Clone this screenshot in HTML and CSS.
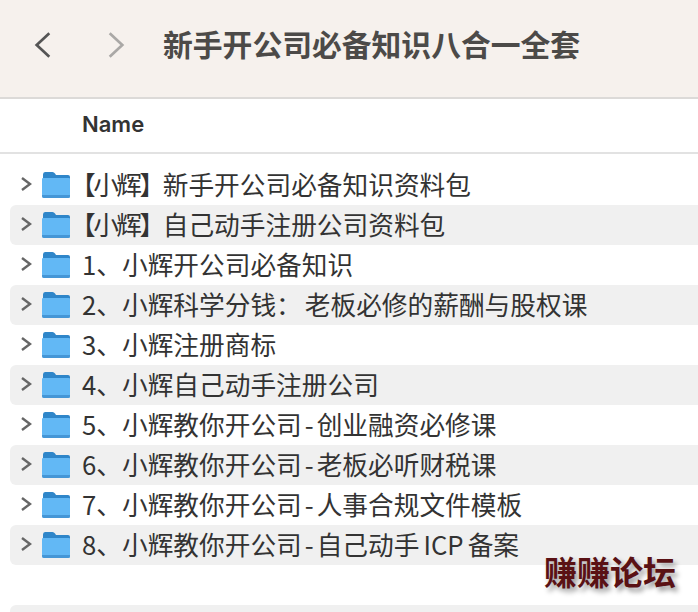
FILE: index.html
```html
<!DOCTYPE html>
<html lang="zh">
<head>
<meta charset="utf-8">
<title>新手开公司必备知识八合一全套</title>
<link rel="stylesheet" href="styles.css">
</head>
<body>
<svg class="defs" width="0" height="0">
  <symbol id="folder" viewBox="0 0 30 28">
    <path d="M2 26V4.5Q2 2 4 2h7.5q1.5 0 2.5 1.5L15 5h12q2 0 2 2v19q0 2-2 2H4q-2 0-2-2z" fill="#2f86c9"/>
    <path d="M1 9q0-1 1-1h26q1 0 1 1v17q0 2-2 2H3q-2 0-2-2z" fill="#62b8f5"/>
    <path d="M1 25h28v1q0 2-2 2H3q-2 0-2-2z" fill="#4596d6"/>
  </symbol>
  <symbol id="chev" viewBox="0 0 12 16">
    <path d="M2 2l8 6-8 6" fill="none" stroke="#666" stroke-width="2.4"/>
  </symbol>
</svg>
<div class="window">
  <header class="toolbar">
    <svg class="nav nav-back" viewBox="0 0 20 30"><path d="M17 2L3 15l14 13" fill="none" stroke="#555" stroke-width="3"/></svg>
    <svg class="nav nav-forward" viewBox="0 0 20 30"><path d="M3 2l14 13L3 28" fill="none" stroke="#aaa8a6" stroke-width="3"/></svg>
    <h1 class="title">新手开公司必备知识八合一全套</h1>
  </header>
  <div class="columns"><span class="col-name">Name</span></div>
  <ul class="list">
    <li class="row"><svg class="chev"><use href="#chev"/></svg><svg class="folder"><use href="#folder"/></svg><span class="label label-bracket"><span class="tag">【小辉】</span>新手开公司必备知识资料包</span></li>
    <li class="row"><svg class="chev"><use href="#chev"/></svg><svg class="folder"><use href="#folder"/></svg><span class="label label-bracket"><span class="tag">【小辉】</span>自己动手注册公司资料包</span></li>
    <li class="row"><svg class="chev"><use href="#chev"/></svg><svg class="folder"><use href="#folder"/></svg><span class="label">1、小辉开公司必备知识</span></li>
    <li class="row"><svg class="chev"><use href="#chev"/></svg><svg class="folder"><use href="#folder"/></svg><span class="label">2、小辉科学分钱：<span class="wide">老板必修的薪酬与股权课</span></span></li>
    <li class="row"><svg class="chev"><use href="#chev"/></svg><svg class="folder"><use href="#folder"/></svg><span class="label">3、小辉注册商标</span></li>
    <li class="row"><svg class="chev"><use href="#chev"/></svg><svg class="folder"><use href="#folder"/></svg><span class="label">4、小辉自己动手注册公司</span></li>
    <li class="row"><svg class="chev"><use href="#chev"/></svg><svg class="folder"><use href="#folder"/></svg><span class="label">5、小辉教你开公司<span class="dash">-</span>创业融资必修课</span></li>
    <li class="row"><svg class="chev"><use href="#chev"/></svg><svg class="folder"><use href="#folder"/></svg><span class="label">6、小辉教你开公司<span class="dash">-</span>老板必听财税课</span></li>
    <li class="row"><svg class="chev"><use href="#chev"/></svg><svg class="folder"><use href="#folder"/></svg><span class="label">7、小辉教你开公司<span class="dash">-</span>人事合规文件模板</span></li>
    <li class="row"><svg class="chev"><use href="#chev"/></svg><svg class="folder"><use href="#folder"/></svg><span class="label">8、小辉教你开公司<span class="dash">-</span>自己动手<span class="latin">ICP</span>备案</span></li>
    <li class="row row-empty"></li>
    <li class="row row-empty"></li>
  </ul>
  <div class="watermark">赚赚论坛</div>
</div>
</body>
</html>
```
FILE: styles.css
```css
* { box-sizing: border-box; }
html, body { margin: 0; padding: 0; }
body {
  width: 698px;
  height: 612px;
  overflow: hidden;
  background: #fff;
  font-family: "Inter", "Noto Sans CJK SC", sans-serif;
}
.defs { position: absolute; }
.window { position: relative; width: 698px; height: 612px; overflow: hidden; }
.toolbar {
  height: 99px;
  background: #f6f1ed;
  border-bottom: 2px solid #dcdad8;
  display: flex;
  align-items: center;
  padding: 0 0 11px 34px;
}
.nav { width: 18px; height: 30px; flex: none; margin-top: 3px; }
.nav-forward { margin-left: 55px; }
.title {
  margin: 0 0 0 38px;
  font-family: "Noto Sans CJK SC", sans-serif;
  font-size: 29.8px;
  line-height: 40px;
  font-weight: 700;
  color: #4c4a48;
  white-space: nowrap;
}
.columns {
  height: 55px;
  border-bottom: 2px solid #e2e2e2;
  display: flex;
  align-items: center;
  padding: 0 0 4px 82px;
}
.col-name { font-size: 22px; font-weight: 600; color: #333; }
.list { list-style: none; margin: 11px 0 0; padding: 0; }
.row {
  height: 40px;
  margin-left: 10px;
  border-radius: 6px 0 0 6px;
  display: flex;
  align-items: center;
  padding-left: 10px;
}
.row:nth-child(even) { background: #f0f0f0; }
.chev { width: 12px; height: 16px; flex: none; margin-top: -2px; }
.folder { width: 30px; height: 28px; flex: none; margin-left: 9px; margin-top: -2px; }
.label {
  margin-left: 11px;
  margin-top: -2px;
  font-family: "Noto Sans CJK SC", sans-serif;
  font-size: 25.7px;
  line-height: 34px;
  color: #333;
  white-space: nowrap;
}
.label-bracket { margin-left: -1px; }
.tag { letter-spacing: -2.5px; }
.dash { margin: 0 3px; }
.wide { margin-left: 3px; }
.latin { margin: 0 4px; }
.watermark {
  position: absolute;
  left: 544px;
  top: 549px;
  font-family: "Noto Sans CJK SC", sans-serif;
  font-size: 33px;
  line-height: 44px;
  font-weight: 700;
  color: #5a1114;
  text-shadow: 3px 4px 5px rgba(0, 0, 0, 0.4);
  white-space: nowrap;
}
```
